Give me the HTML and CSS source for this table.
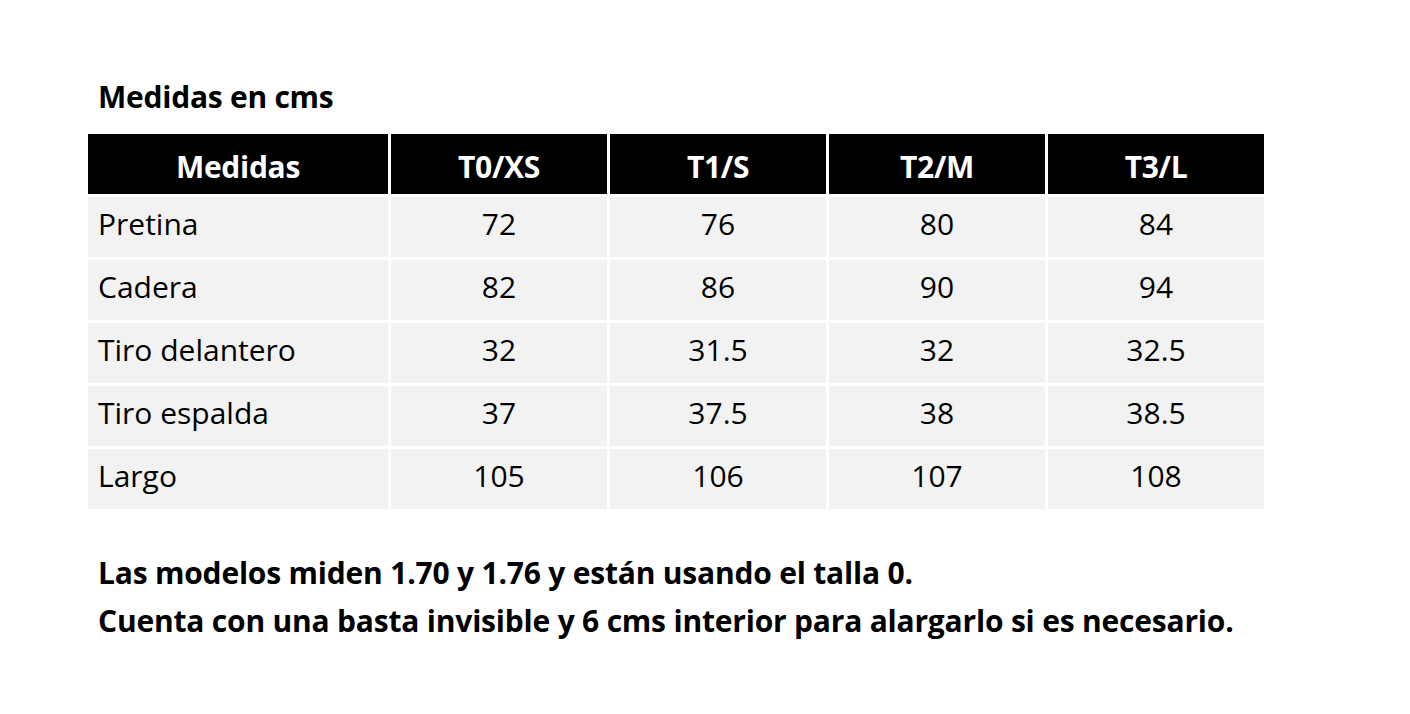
FILE: index.html
```html
<!DOCTYPE html>
<html lang="es">
<head>
<meta charset="utf-8">
<title>Medidas</title>
<link rel="stylesheet" href="styles.css">
</head>
<body>
<div class="page">
  <h2 class="title">Medidas en cms</h2>
  <table class="sizes">
    <thead>
      <tr><th>Medidas</th><th>T0/XS</th><th>T1/S</th><th>T2/M</th><th>T3/L</th></tr>
    </thead>
    <tbody>
      <tr><td>Pretina</td><td>72</td><td>76</td><td>80</td><td>84</td></tr>
      <tr><td>Cadera</td><td>82</td><td>86</td><td>90</td><td>94</td></tr>
      <tr><td>Tiro delantero</td><td>32</td><td>31.5</td><td>32</td><td>32.5</td></tr>
      <tr><td>Tiro espalda</td><td>37</td><td>37.5</td><td>38</td><td>38.5</td></tr>
      <tr><td>Largo</td><td>105</td><td>106</td><td>107</td><td>108</td></tr>
    </tbody>
  </table>
  <div class="notes">
    <p>Las modelos miden 1.70 y 1.76 y están usando el talla 0.</p>
    <p>Cuenta con una basta invisible y 6 cms interior para alargarlo si es necesario.</p>
  </div>
</div>
</body>
</html>
```
FILE: styles.css
```css
html, body { margin: 0; padding: 0; background: #fff; }
body {
  font-family: "Open Sans", "Noto Sans", sans-serif;
  color: #000;
}
.page {
  padding: 76px 0 0 85px;
}
.title {
  margin: 0 0 13px 13px;
  font-size: 30px;
  font-weight: 700;
  line-height: 42px;
  letter-spacing: -0.25px;
}
.sizes {
  border-collapse: separate;
  border-spacing: 3px;
  font-size: 30px;
}
.sizes th, .sizes td {
  height: 60px;
  padding: 0 10px;
  box-sizing: border-box;
  text-align: center;
}
.sizes th {
  background: #000;
  color: #fff;
  font-weight: 700;
  padding-top: 5px;
  letter-spacing: -0.3px;
}
.sizes td {
  background: #f2f2f2;
  font-weight: 400;
  padding-bottom: 8px;
}
.sizes th:first-child { width: 300px; }
.sizes th:not(:first-child) { width: 216px; }
.sizes td:first-child { text-align: left; }
.notes {
  margin: 37px 0 0 13px;
  font-size: 30px;
  font-weight: 700;
  line-height: 48px;
  letter-spacing: -0.2px;
}
.notes p { margin: 0; }
```
